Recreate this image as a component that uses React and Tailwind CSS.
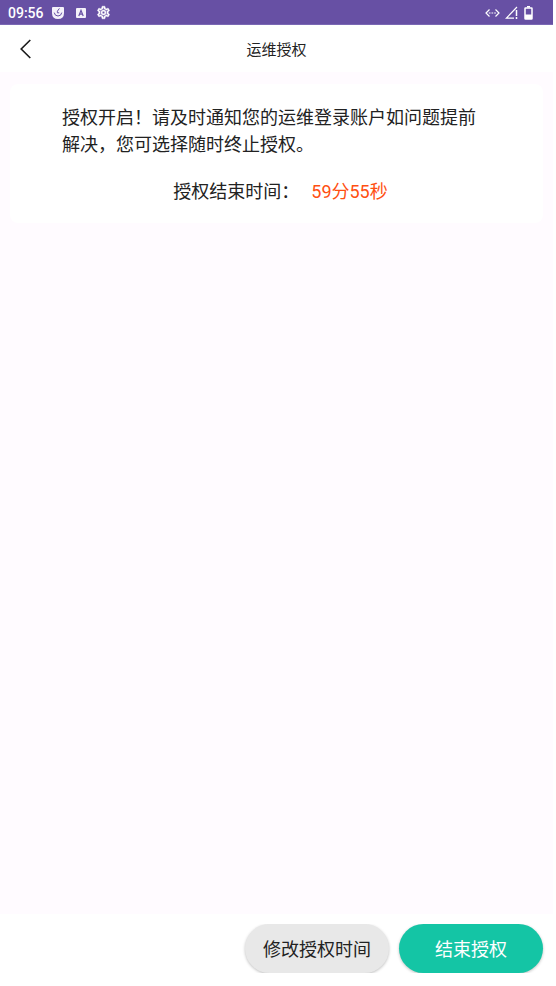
const fontStack = "font-[Roboto,'Noto_Sans_CJK_SC',sans-serif]";

function StatusBar() {
  return (
    <div className="flex h-[25px] items-center justify-between border-b border-[#7a68b4] bg-[#6750a4] pt-px pr-5 pl-2 text-white">
      <div className="flex items-center">
        <span className="w-[44px] text-sm font-medium">09:56</span>
        <svg className="size-3" viewBox="0 0 12 12" fill="none" aria-hidden="true">
          <path d="M0 1Q0 0 1 0H11Q12 0 12 1V6Q12 12 6 12Q0 12 0 6Z" fill="#f4f1fa" />
          <path d="M7.4 1.4L5.4 4.2V5.8H7.2" stroke="#6750a4" strokeWidth="1" />
          <path d="M2.2 5.6Q2.8 9 6 9Q9.2 9 9.8 5.6" stroke="#6750a4" strokeWidth="1" />
        </svg>
        <svg className="ml-3 size-[10px]" viewBox="0 0 10 10" fill="none" aria-hidden="true">
          <rect width="10" height="10" rx="1" fill="#f4f1fa" />
          <path d="M2.8 8L5 2.4L7.2 8M3.6 6.1H6.4" stroke="#6750a4" strokeWidth="1.2" />
        </svg>
        <svg className="ml-[10px] size-[15px]" viewBox="0 0 24 24" fill="currentColor" aria-hidden="true">
          <path d="M19.43 12.98c.04-.32.07-.64.07-.98s-.03-.66-.07-.98l2.11-1.65c.19-.15.24-.42.12-.64l-2-3.46c-.12-.22-.39-.3-.61-.22l-2.49 1c-.52-.4-1.08-.73-1.69-.98l-.38-2.65C14.46 2.18 14.25 2 14 2h-4c-.25 0-.46.18-.49.42l-.38 2.65c-.61.25-1.17.59-1.69.98l-2.49-1c-.23-.09-.49 0-.61.22l-2 3.46c-.13.22-.07.49.12.64l2.11 1.65c-.04.32-.07.65-.07.98s.03.66.07.98l-2.11 1.65c-.19.15-.24.42-.12.64l2 3.46c.12.22.39.3.61.22l2.49-1c.52.4 1.08.73 1.69.98l.38 2.65c.03.24.24.42.49.42h4c.25 0 .46-.18.49-.42l.38-2.65c.61-.25 1.17-.59 1.69-.98l2.49 1c.23.09.49 0 .61-.22l2-3.46c.12-.22.07-.49-.12-.64zm-1.98-1.71c.04.31.05.52.05.73s-.02.43-.05.73l-.14 1.13.89.7 1.08.84-.7 1.21-1.27-.51-1.04-.42-.9.68c-.43.32-.84.56-1.25.73l-1.06.43-.16 1.13-.2 1.35h-1.4l-.19-1.35-.16-1.13-1.06-.43c-.43-.18-.83-.41-1.23-.71l-.91-.7-1.06.43-1.27.51-.7-1.21 1.08-.84.89-.7-.14-1.13c-.03-.31-.05-.54-.05-.74s.02-.43.05-.73l.14-1.13-.89-.7-1.08-.84.7-1.21 1.27.51 1.04.42.9-.68c.43-.32.84-.56 1.25-.73l1.06-.43.16-1.13.2-1.35h1.39l.19 1.35.16 1.13 1.06.43c.43.18.83.41 1.23.71l.91.7 1.06-.43 1.27-.51.7 1.21-1.07.85-.89.7zM12 8a4 4 0 1 0 0 8 4 4 0 0 0 0-8zm0 6a2 2 0 1 1 0-4 2 2 0 0 1 0 4z" stroke="currentColor" strokeWidth="0.7" />
        </svg>
      </div>
      <div className="flex items-center">
        <svg className="h-[10px] w-[15px]" viewBox="0 0 15 10" fill="none" stroke="currentColor" strokeWidth="1.2" aria-hidden="true">
          <path d="M4.5 1.5L1 5L4.5 8.5M10.5 1.5L14 5L10.5 8.5" />
          <path d="M3.8 5H11.5" strokeDasharray="1.7 1" />
        </svg>
        <svg className="ml-[5px] size-[13px]" viewBox="0 0 13 13" fill="none" stroke="currentColor" aria-hidden="true">
          <path d="M9 12.2H1.3L12 1" strokeWidth="1.2" />
          <path d="M11.5 4V10M11.5 11V13" strokeWidth="1.5" />
        </svg>
        <svg className="ml-[6px] h-[14px] w-[9px]" viewBox="0 0 9 14" fill="none" aria-hidden="true">
          <path d="M3 0H6V1.5H3Z" fill="white" />
          <rect x="1" y="2" width="7" height="11" rx="0.5" stroke="white" strokeWidth="1.5" />
          <path d="M1 8.5H8V13H1Z" fill="white" />
        </svg>
      </div>
    </div>
  );
}

export default function App() {
  return (
    <div className="min-h-screen bg-white pr-[3px] pb-[3px]">
      <div className={`flex min-h-[calc(100vh-3px)] flex-col bg-[#fffbff] text-[#222222] ${fontStack}`}>
        <StatusBar />
        <header className="grid h-[47px] grid-cols-[52px_1fr_52px] items-center bg-white">
          <button type="button" aria-label="返回" className="flex h-full items-center pl-5">
            <svg className="h-5 w-3" viewBox="0 0 12 20" fill="none" stroke="#1a1a1a" strokeWidth="1.6" aria-hidden="true">
              <path d="M10.3 1L1.2 10L10.3 19" />
            </svg>
          </button>
          <h1 className="pt-0.5 text-center text-[15px] leading-6">运维授权</h1>
        </header>
        <main className="flex-1 px-[10px] pt-3">
          <section className="rounded-lg bg-white px-[52px] pt-5 pb-[18px] text-lg leading-[27px]">
            <p>授权开启！请及时通知您的运维登录账户如问题提前解决，您可选择随时终止授权。</p>
            <p className="mt-5 flex justify-center gap-3 pl-2">
              <span>授权结束时间：</span>
              <span className="text-[#ff4f12]">59分55秒</span>
            </p>
          </section>
        </main>
        <footer className="bg-white py-[10px]">
          <div className="flex justify-end gap-[10px] overflow-hidden px-[10px]">
            <button type="button" className="h-[49px] w-36 rounded-full bg-[#e8e8e8] pt-0.5 text-lg shadow-[0_1px_3px_rgba(0,0,0,0.25)]">
              修改授权时间
            </button>
            <button type="button" className="h-[49px] w-36 rounded-full bg-[#14c5a5] pt-0.5 text-lg text-white shadow-[0_1px_3px_rgba(0,0,0,0.25)]">
              结束授权
            </button>
          </div>
        </footer>
      </div>
    </div>
  );
}
